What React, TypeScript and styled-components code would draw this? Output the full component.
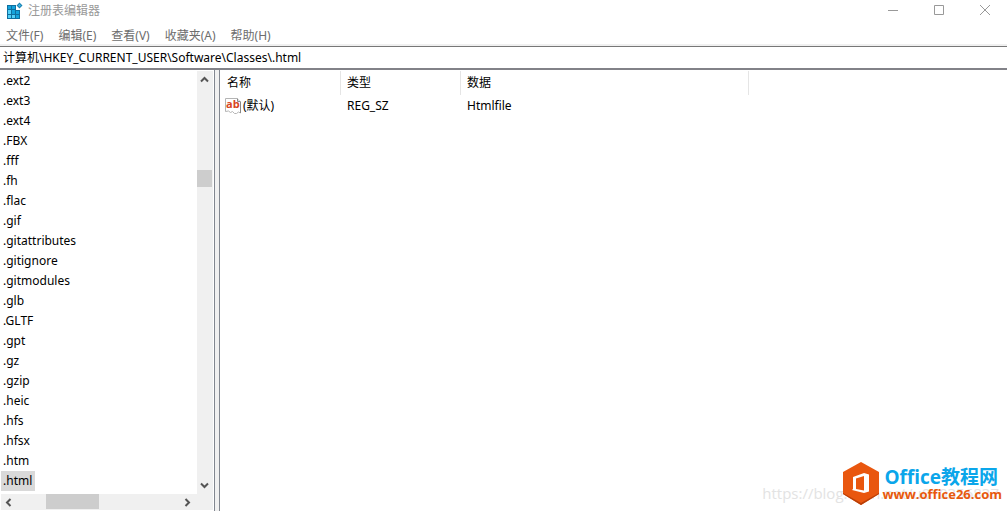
import React from "react";
import styled, { createGlobalStyle } from "styled-components";

const Global = createGlobalStyle`
  * { box-sizing: border-box; }
  body { margin: 0; background: #fff; color: #000; font: 12px/20px "Noto Sans", "Noto Sans CJK SC", sans-serif; }
  button, input { font: inherit; color: inherit; }
`;
const Window = styled.div`display: flex; flex-direction: column; min-height: 100vh; position: relative; overflow: hidden;`;
const TitleBar = styled.header`display: flex; align-items: center; height: 22px; padding-left: 6px; color: #999;`;
const Title = styled.h1`flex: 1; margin: 0 0 0 5px; font-size: 12px; font-weight: 400;`;
const Controls = styled.div`display: flex; align-items: center; height: 20px; align-self: flex-start;`;
const Caption = styled.button`
  width: 46px; height: 20px; padding: 0; border: 0; background: none; color: #999;
  display: flex; align-items: center; justify-content: center;
`;
const MenuBar = styled.nav`display: flex; gap: 15px; height: 24px; padding: 5px 6px 0; border-bottom: 2px solid #f0f0f0;`;
const MenuItem = styled.button`padding: 0; border: 0; background: none; color: #6d6d6d; height: 18px; display: flex; align-items: center;`;
const Address = styled.input`
  width: 100%; height: 24px; padding: 0 3px 1px; border: solid #777; border-width: 1px 0 2px;
  border-bottom-color: #828288; border-radius: 0; outline: 0; background: #fff;
`;
const Panes = styled.main`flex: 1; display: grid; grid-template-columns: 215px 4px minmax(0, 1fr);`;
const TreePane = styled.section`
  display: grid; grid-template-columns: minmax(0, 1fr) 16px; grid-template-rows: 1fr 16px;
  padding: 1px; border-right: 1px solid #828790; background: #fff;
`;
const Tree = styled.ul`list-style: none; margin: 0; padding: 0 0 3px;`;
const Key = styled.li<{ $selected?: boolean }>`
  width: max-content; height: 20px; padding: 0 3px 0 2px;
  background: ${(p) => (p.$selected ? "#d9d9d9" : "transparent")};
`;
const Track = styled.div<{ $horizontal?: boolean }>`
  display: flex; flex-direction: ${(p) => (p.$horizontal ? "row" : "column")};
  grid-column: ${(p) => (p.$horizontal ? "1 / -1" : "auto")};
  padding: ${(p) => (p.$horizontal ? "0 18px 0 0" : "0 0 1px")};
  background: #f0f0f0;
`;
const Arrow = styled.button`
  width: 15px; height: 16px; padding: 0; border: 0; background: none; color: #555;
  display: flex; align-items: center; justify-content: center;
`;
const Space = styled.div<{ $grow: number }>`flex: ${(p) => p.$grow} 1 0;`;
const Thumb = styled.div<{ $w: number; $h: number }>`width: ${(p) => p.$w}px; height: ${(p) => p.$h}px; background: #cdcdcd;`;
const Splitter = styled.div`background: #f0f0f0;`;
const ValuePane = styled.section`border-left: 1px solid #828790; padding-top: 1px;`;
const Values = styled.table`
  border-collapse: separate; border-spacing: 0; table-layout: fixed; width: 100%;
  th:first-child { padding-left: 7px; }
`;
const Head = styled.th<{ $w?: number }>`
  width: ${(p) => (p.$w ? `${p.$w}px` : "auto")}; height: 24px; padding: 0 0 0 6px;
  text-align: left; font-weight: 400; border-right: ${(p) => (p.$w ? "1px solid #e5e5e5" : "0")};
`;
const Cell = styled.td`height: 22px; padding: 0 0 0 6px;`;
const NameCell = styled(Cell)`padding-left: 5px;`;
const Name = styled.span`display: flex; align-items: center; gap: 2px;`;
const UrlMark = styled.span`
  position: absolute; right: 8px; bottom: 8px; color: #e3e3e3;
  font: 15px/20px "Open Sans", sans-serif; white-space: nowrap;
`;
const Brand = styled.aside`position: absolute; right: 5px; bottom: 6px; display: flex; align-items: center; gap: 3px;`;
const BrandText = styled.div`display: flex; flex-direction: column; padding-top: 1px; font-family: "Open Sans", "Noto Sans CJK SC", sans-serif; font-weight: 700;`;
const BrandName = styled.span`padding-left: 2px; color: #0ba6ea; font-size: 19px; line-height: 20px;`;
const BrandUrl = styled.a`color: #e8590c; font-size: 13px; line-height: 14px; text-decoration: none;`;

const keys = [".ext2", ".ext3", ".ext4", ".FBX", ".fff", ".fh", ".flac", ".gif", ".gitattributes", ".gitignore", ".gitmodules", ".glb", ".GLTF", ".gpt", ".gz", ".gzip", ".heic", ".hfs", ".hfsx", ".htm", ".html"];
const menus = ["文件(F)", "编辑(E)", "查看(V)", "收藏夹(A)", "帮助(H)"];

const Chevron = ({ turn }: { turn: number }) => (
  <svg width="9" height="9" viewBox="0 0 9 9" fill="none" stroke="currentColor" strokeWidth="2">
    <path d="M1 6.5 4.5 3 8 6.5" transform={`rotate(${turn} 4.5 4.5)`} />
  </svg>
);

const RegistryIcon = () => (
  <svg width="17" height="18" viewBox="0 0 17 18">
    <path d="M1 3h9v5h4v9H1z" fill="#0f6f9f" />
    <path d="M2 4h3v3H2zM6 4h3v3H6zM6 8h3v4H6zM10 9h3v3h-3zM10 13h3v3h-3z" fill="#14a3dc" />
    <path d="M2 8h3v4H2zM2 13h3v3H2zM6 13h3v3H6z" fill="#52d0f8" />
    <path d="m13.500.5 3 3-3 3-3-3z" fill="#1683b5" />
    <path d="m13.500 2 1.500 1.500-1.500 1.500-1.500-1.500z" fill="#4cb5df" />
  </svg>
);

const StringIcon = () => (
  <svg width="16" height="16" viewBox="0 0 16 16">
    <path d="M.5.5h11.500l3.500 3.500v11l-2-1-2 1.500h-2l-2-2-2 1-2-1.500-3 .5z" fill="#fff" stroke="#b4b4b4" />
    <path d="M12.500.5v3h3M15.500 4v11" fill="none" stroke="#888" />
    <text x="1" y="10" fill="#d8451c" fontFamily="Open Sans, sans-serif" fontWeight="700" fontSize="11">ab</text>
  </svg>
);

const OfficeLogo = () => (
  <svg width="36" height="43" viewBox="0 0 36 43">
    <path d="M18 0 36 10v22L18 43 0 32V10z" fill="#e9570f" />
    <path d="M0 31 18 41 36 31v1L18 43 0 32z" fill="#b83f08" />
    <path d="M10 15 21 11l5 1.500v17L21 31 9 28l1-1z" fill="#fff" />
    <path d="M13 16.500 21 14v14.500l-8-1.500z" fill="#e9570f" />
  </svg>
);

export default function App() {
  return (
    <>
      <Global />
      <Window>
        <TitleBar>
          <RegistryIcon />
          <Title>注册表编辑器</Title>
          <Controls>
            <Caption aria-label="最小化"><svg width="12" height="12"><path d="M2 6.500h10" stroke="currentColor" /></svg></Caption>
            <Caption aria-label="最大化"><svg width="12" height="12"><path d="M2.500 1.500h9v9h-9z" fill="none" stroke="currentColor" /></svg></Caption>
            <Caption aria-label="关闭"><svg width="12" height="12"><path d="m2 1 10 10M12 1 2 11" stroke="currentColor" /></svg></Caption>
          </Controls>
        </TitleBar>
        <MenuBar>{menus.map((m) => <MenuItem key={m}>{m}</MenuItem>)}</MenuBar>
        <Address aria-label="地址" defaultValue="计算机\HKEY_CURRENT_USER\Software\Classes\.html" />
        <Panes>
          <TreePane>
            <Tree>{keys.map((k) => <Key key={k} $selected={k === ".html"}>{k}</Key>)}</Tree>
            <Track>
              <Arrow aria-label="向上"><Chevron turn={0} /></Arrow>
              <Space $grow={83} /><Thumb $w={15} $h={17} /><Space $grow={289} />
              <Arrow aria-label="向下"><Chevron turn={180} /></Arrow>
            </Track>
            <Track $horizontal>
              <Arrow aria-label="向左"><Chevron turn={270} /></Arrow>
              <Space $grow={30} /><Thumb $w={53} $h={15} /><Space $grow={81} />
              <Arrow aria-label="向右"><Chevron turn={90} /></Arrow>
            </Track>
          </TreePane>
          <Splitter />
          <ValuePane>
            <Values>
              <thead><tr><Head $w={121}>名称</Head><Head $w={120}>类型</Head><Head $w={288}>数据</Head><Head as="td" /></tr></thead>
              <tbody><tr><NameCell><Name><StringIcon />(默认)</Name></NameCell><Cell>REG_SZ</Cell><Cell>Htmlfile</Cell><Cell /></tr></tbody>
            </Values>
          </ValuePane>
        </Panes>
        <UrlMark>https://blog.csdn.net/u010356837</UrlMark>
        <Brand>
          <OfficeLogo />
          <BrandText><BrandName>Office教程网</BrandName><BrandUrl href="#">www.office26.com</BrandUrl></BrandText>
        </Brand>
      </Window>
    </>
  );
}
